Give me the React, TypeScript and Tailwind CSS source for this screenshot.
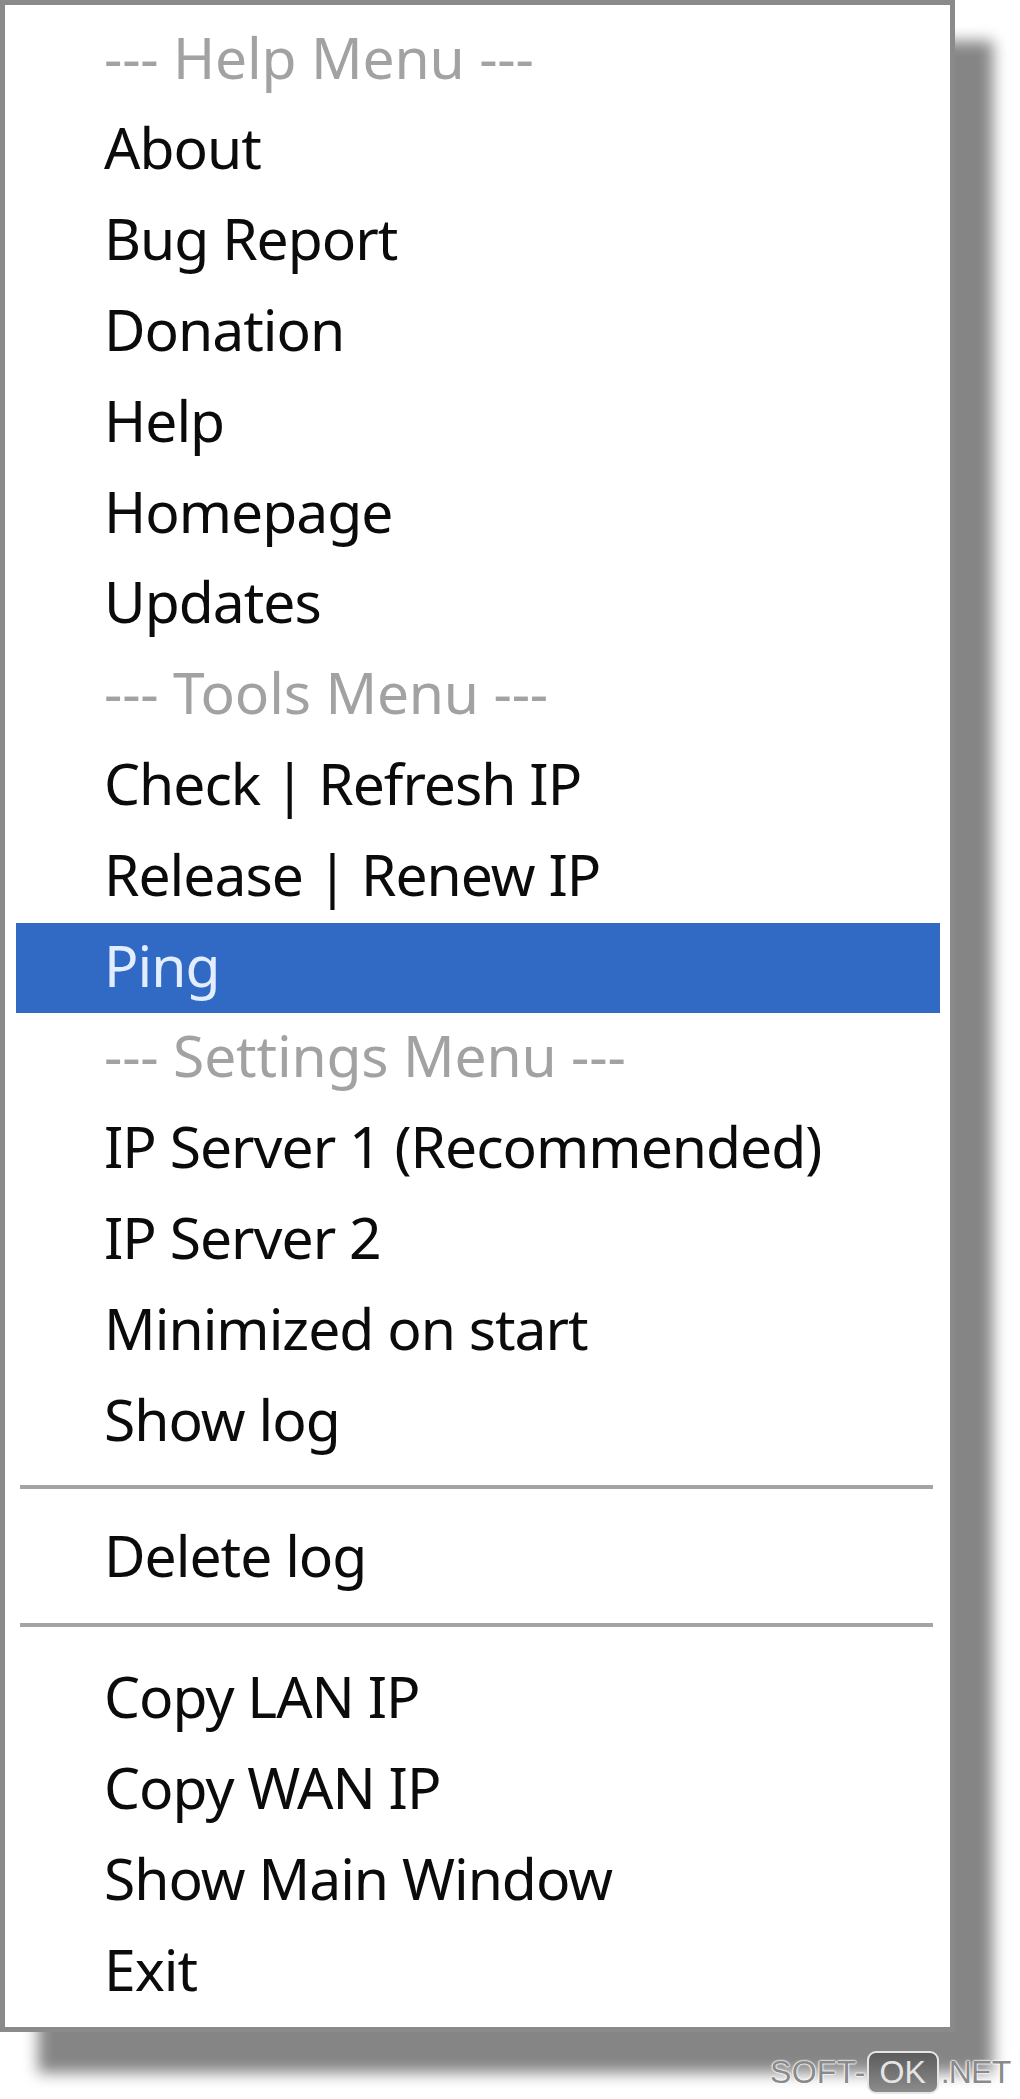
type Kind = "head" | "item" | "active";

type Row = { label: string; kind: Kind } | { sep: "a" | "b" };

const rows: Row[] = [
  { label: "--- Help Menu ---", kind: "head" },
  { label: "About", kind: "item" },
  { label: "Bug Report", kind: "item" },
  { label: "Donation", kind: "item" },
  { label: "Help", kind: "item" },
  { label: "Homepage", kind: "item" },
  { label: "Updates", kind: "item" },
  { label: "--- Tools Menu ---", kind: "head" },
  { label: "Check | Refresh IP", kind: "item" },
  { label: "Release | Renew IP", kind: "item" },
  { label: "Ping", kind: "active" },
  { label: "--- Settings Menu ---", kind: "head" },
  { label: "IP Server 1 (Recommended)", kind: "item" },
  { label: "IP Server 2", kind: "item" },
  { label: "Minimized on start", kind: "item" },
  { label: "Show log", kind: "item" },
  { sep: "a" },
  { label: "Delete log", kind: "item" },
  { sep: "b" },
  { label: "Copy LAN IP", kind: "item" },
  { label: "Copy WAN IP", kind: "item" },
  { label: "Show Main Window", kind: "item" },
  { label: "Exit", kind: "item" },
];

const kindClass: Record<Kind, string> = {
  head: "text-[#a2a2a2] tracking-[-0.2px]",
  item: "text-[#0b0b0b] tracking-[-1px]",
  active: "bg-[#316ac5] text-[#e2edff] tracking-[-1px]",
};

const MenuRow = ({ label, kind }: { label: string; kind: Kind }) => (
  <div
    className={`ml-[11px] mr-[10px] flex h-[90.8px] items-center pb-[5px] pl-[88px] ${kindClass[kind]}`}
  >
    <span className="whitespace-nowrap leading-[1.362]">{label}</span>
  </div>
);

const Separator = ({ tall }: { tall: boolean }) => (
  <div className={tall ? "h-[50px] pt-[19px]" : "h-[46px] pt-[17.6px]"}>
    <div className="ml-[15px] mr-[17px] h-[4px] bg-[#a4a4a4]" />
  </div>
);

const outline = "[text-shadow:0_0_2px_#fff,0_0_2px_#fff,0_0_2px_#fff,0_0_1px_#fff]";

const Watermark = () => (
  <div className="absolute left-[770px] top-[2051px] flex h-[42px] items-center font-['Liberation_Sans',Arial,sans-serif] text-[32px] leading-none">
    <span className={`tracking-[0.3px] text-[#8a8a8a] ${outline}`}>SOFT-</span>
    <span className="ml-[1px] mr-[2px] flex h-[43px] w-[72px] items-center justify-center rounded-[9px] border-2 border-[#e6e6e6] bg-gradient-to-b from-[#5c5c5c] to-[#8c8c8c] text-[#e4e4e4]">
      OK
    </span>
    <span className={`tracking-[-0.8px] text-[#8a8a8a] ${outline}`}>.NET</span>
  </div>
);

export default function App() {
  return (
    <div className="relative h-[2099px] w-[1020px] overflow-hidden bg-white font-['Noto_Sans','Open_Sans',sans-serif] text-[57px]">
      <div className="w-[955px] border-[5px] border-[#8a8a8a] bg-white pb-[10px] pt-[9.6px] shadow-[38px_41px_14px_rgba(0,0,0,0.48)]">
        {rows.map((r, i) =>
          "sep" in r ? (
            <Separator key={i} tall={r.sep === "b"} />
          ) : (
            <MenuRow key={i} label={r.label} kind={r.kind} />
          )
        )}
      </div>
      <Watermark />
    </div>
  );
}
